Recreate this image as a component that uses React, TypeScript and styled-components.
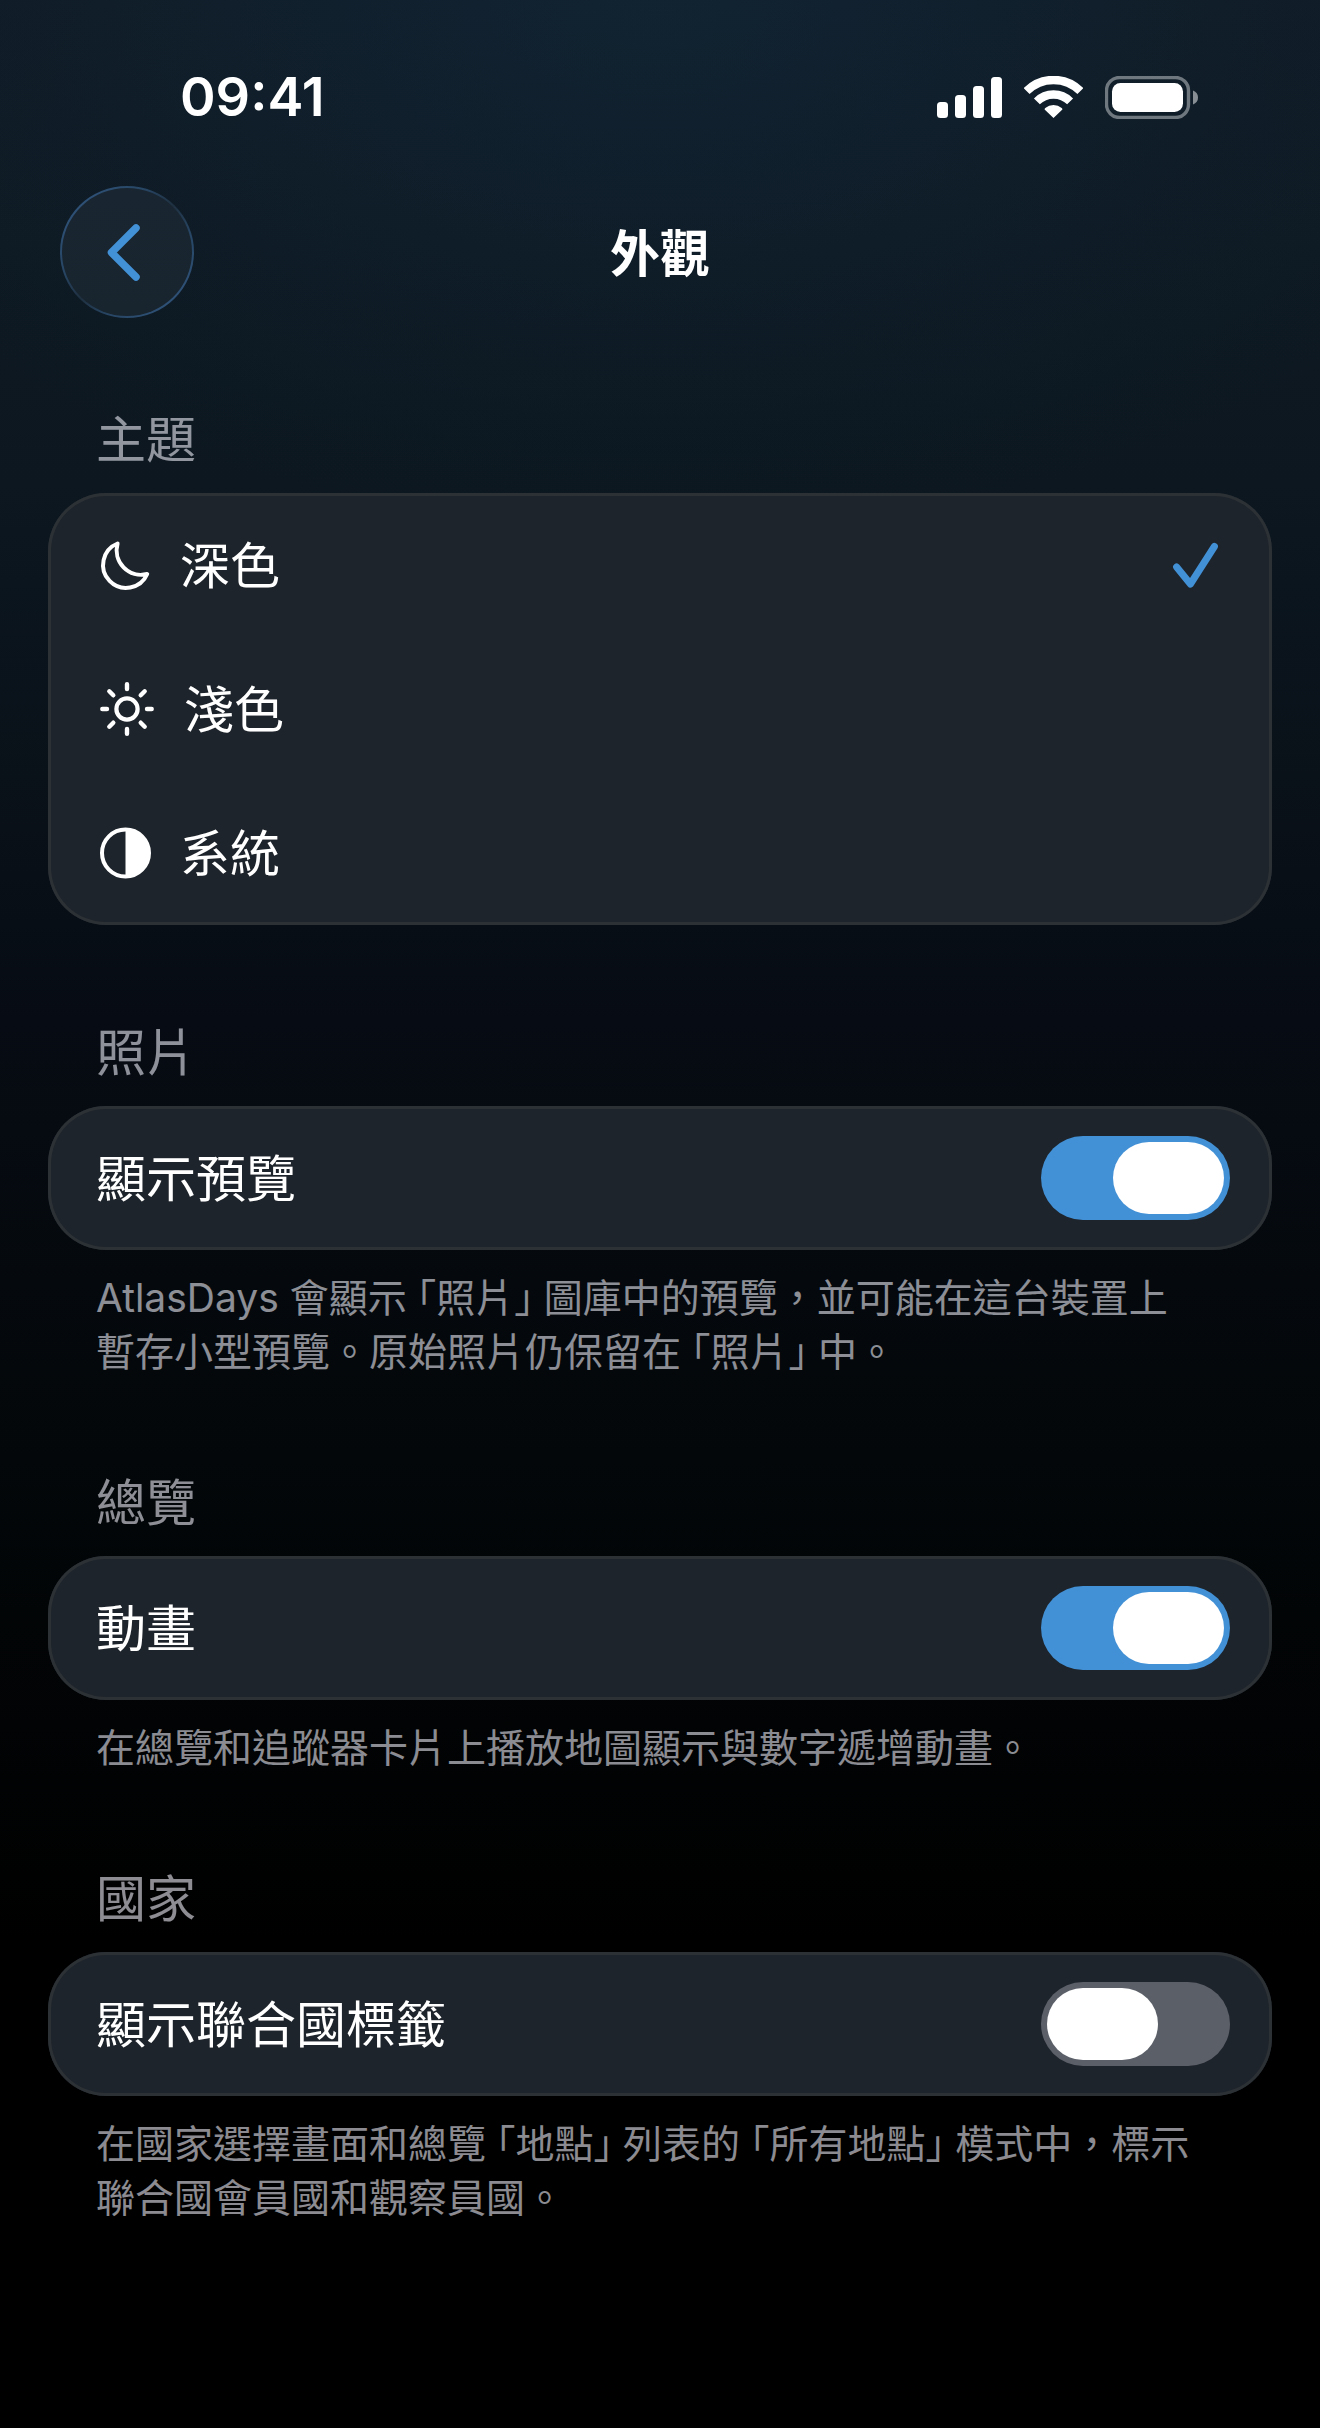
import React, { useState } from "react";
import styled, { createGlobalStyle } from "styled-components";

const accent = "#4290d5";
const secondary = "rgba(235, 235, 245, 0.6)";

const GlobalStyle = createGlobalStyle`
  *, *::before, *::after { box-sizing: border-box; }
  html { background: #000; }
  body {
    margin: 0;
    font-family: Inter, "Noto Sans CJK TC", sans-serif;
    color: #fff;
  }
`;

const Screen = styled.div`
  min-height: 100vh;
  padding-bottom: 96px;
  background:
    radial-gradient(ellipse 70% 22% at 50% 0, rgba(20, 52, 78, 0.3), transparent),
    linear-gradient(#101b25 0%, #0c171f 20%, #070c14 42%, #030709 60%, #000 80%);
`;

const StatusBar = styled.div`
  display: flex;
  align-items: center;
  justify-content: space-between;
  padding: 64px 122px 0 180px;
`;

const Clock = styled.time`
  font-size: 54px;
  line-height: 66px;
  font-weight: 600;
`;

const StatusIcons = styled.div`
  display: flex;
  align-items: center;
  gap: 22px;

  svg { display: block; }
`;

const NavBar = styled.header`
  display: grid;
  grid-template-columns: 134px 1fr 134px;
  align-items: center;
  padding: 56px 60px 0;
`;

const BackButton = styled.button`
  width: 134px;
  height: 132px;
  padding: 0;
  border: 2px solid transparent;
  border-radius: 50%;
  background:
    linear-gradient(#192631, #18242e) padding-box,
    linear-gradient(135deg, #2f5278 12%, #274563 34%, #1f3040 50%, #274563 66%, #2f5278 88%) border-box;
  cursor: pointer;

  svg { display: block; margin: auto; }
`;

const Title = styled.h1`
  margin: 0;
  padding-top: 3px;
  font-size: 50px;
  line-height: 66px;
  font-weight: 600;
  text-align: center;
`;

const Content = styled.main`
  display: flex;
  flex-direction: column;
  gap: 95px;
  padding: 89px 48px 0;
`;

const SectionTitle = styled.h2`
  margin: 0 48px 20px;
  font-size: 50px;
  line-height: 66px;
  font-weight: 400;
  color: ${secondary};
`;

const Card = styled.div`
  border-radius: 58px;
  background: #1e242b;
  box-shadow: inset 0 0 0 3px #2c3136;
`;

const Row = styled.label`
  display: flex;
  align-items: center;
  min-height: 144px;
  padding: 0 42px 0 48px;
  font-size: 50px;
  line-height: 66px;
  cursor: pointer;
`;

const RowLabel = styled.span`
  flex: 1;
  padding-top: 2px;
`;

const OptionIcon = styled.span`
  margin: 0 28px 0 2px;

  svg { display: block; }
`;

const HiddenRadio = styled.input`
  position: absolute;
  opacity: 0;
  pointer-events: none;
`;

const Switch = styled.input`
  appearance: none;
  display: flex;
  flex: none;
  width: 189px;
  height: 84px;
  margin: 0;
  padding: 6px;
  border-radius: 42px;
  background: #5b5f68;
  cursor: pointer;

  &::before {
    content: "";
    width: 111px;
    height: 72px;
    border-radius: 36px;
    background: #fff;
  }

  &:checked {
    justify-content: flex-end;
    background: ${accent};
  }
`;

const Note = styled.p`
  margin: 21px 34px -4px 48px;
  padding-right: 48px;
  font-size: 39px;
  line-height: 54px;
  color: ${secondary};
`;

const OpenMark = styled.span`
  margin-left: 10px;
  font-feature-settings: "halt";
`;

const CloseMark = styled.span`
  margin-right: 10px;
  font-feature-settings: "halt";
`;

function Quoted({ children }: { children: React.ReactNode }) {
  return (
    <>
      <OpenMark>「</OpenMark>
      {children}
      <CloseMark>」</CloseMark>
    </>
  );
}

function SignalIcon() {
  return (
    <svg width="65" height="42" viewBox="0 0 65 42" fill="#fff" aria-hidden="true">
      <rect x="0" y="26" width="11" height="16" rx="3.5" />
      <rect x="18" y="19" width="11" height="23" rx="3.5" />
      <rect x="36" y="10" width="11" height="32" rx="3.5" />
      <rect x="54" y="1" width="11" height="41" rx="3.5" />
    </svg>
  );
}

function WifiIcon() {
  return (
    <svg width="59" height="42" viewBox="0 0 59 42" fill="none" aria-hidden="true">
      <path d="M2.6 15.1 A38 38 0 0 1 56.4 15.1" stroke="#fff" strokeWidth="8.4" />
      <path d="M12.9 25.4 A23.5 23.5 0 0 1 46.1 25.4" stroke="#fff" strokeWidth="8.4" />
      <path d="M29.5 42 L20.6 33.4 Q20.4 32.4 21.3 31.9 A13 13 0 0 1 37.7 31.9 Q38.6 32.4 38.4 33.4 Z" fill="#fff" />
    </svg>
  );
}

function BatteryIcon() {
  return (
    <svg width="93" height="43" viewBox="0 0 93 43" aria-hidden="true">
      <rect x="1.5" y="1.5" width="82" height="40" rx="13" fill="none" stroke="#fff" strokeOpacity="0.4" strokeWidth="3.4" />
      <rect x="7" y="7" width="71" height="29" rx="8.5" fill="#fff" />
      <path d="M88 14.5 Q93 16.5 93 21.5 Q93 26.5 88 28.5 Z" fill="#fff" fillOpacity="0.5" />
    </svg>
  );
}

function ChevronIcon() {
  return (
    <svg width="130" height="128" viewBox="2 2 130 128" fill="none" aria-hidden="true">
      <path d="M76 42 L51.5 66.5 L76 91" stroke={accent} strokeWidth="7.5" strokeLinecap="round" strokeLinejoin="round" />
    </svg>
  );
}

function MoonIcon() {
  return (
    <svg width="54" height="58" viewBox="0 0 54 58" fill="none" aria-hidden="true">
      <path
        d="M19.6 7.5 A23 23 0 1 0 49.2 38 A24.5 24.5 0 0 1 19.6 7.5 Z"
        stroke="#fff"
        strokeWidth="4"
        strokeLinejoin="round"
      />
    </svg>
  );
}

function SunIcon() {
  return (
    <svg width="58" height="58" viewBox="-29 -29 58 58" fill="none" stroke="#fff" strokeWidth="4.4" strokeLinecap="round" aria-hidden="true">
      <circle r="10.6" strokeWidth="4.2" />
      <path d="M0 -20 V-24.7 M0 20 V24.7 M-20 0 H-24.7 M20 0 H24.7 M13.7 -13.7 L17.7 -17.7 M13.7 13.7 L17.7 17.7 M-13.7 13.7 L-17.7 17.7 M-13.7 -13.7 L-17.7 -17.7" />
    </svg>
  );
}

function ContrastIcon() {
  return (
    <svg width="54" height="58" viewBox="0 0 54 58" fill="none" aria-hidden="true">
      <circle cx="27.5" cy="29" r="23.5" stroke="#fff" strokeWidth="4" />
      <path d="M27.5 5.5 A23.5 23.5 0 0 1 27.5 52.5 Z" fill="#fff" />
    </svg>
  );
}

function CheckIcon() {
  return (
    <svg width="60" height="58" viewBox="0 0 60 58" fill="none" aria-hidden="true">
      <path d="M6.6 31 L20.4 48 L44.4 10.5" stroke={accent} strokeWidth="7" strokeLinecap="round" strokeLinejoin="round" />
    </svg>
  );
}

const themes = [
  { id: "dark", label: "深色", icon: <MoonIcon /> },
  { id: "light", label: "淺色", icon: <SunIcon /> },
  { id: "system", label: "系統", icon: <ContrastIcon /> },
];

interface ToggleSectionProps {
  title: string;
  label: string;
  initial: boolean;
  children: React.ReactNode;
}

function ToggleSection({ title, label, initial, children }: ToggleSectionProps) {
  const [on, setOn] = useState(initial);
  return (
    <section>
      <SectionTitle>{title}</SectionTitle>
      <Card>
        <Row>
          <RowLabel>{label}</RowLabel>
          <Switch type="checkbox" role="switch" checked={on} onChange={(e) => setOn(e.target.checked)} />
        </Row>
      </Card>
      <Note>{children}</Note>
    </section>
  );
}

export default function App() {
  const [theme, setTheme] = useState("dark");
  return (
    <Screen lang="zh-Hant">
      <GlobalStyle />
      <StatusBar>
        <Clock>09:41</Clock>
        <StatusIcons>
          <SignalIcon />
          <WifiIcon />
          <BatteryIcon />
        </StatusIcons>
      </StatusBar>
      <NavBar>
        <BackButton type="button" aria-label="返回">
          <ChevronIcon />
        </BackButton>
        <Title>外觀</Title>
      </NavBar>
      <Content>
        <section>
          <SectionTitle>主題</SectionTitle>
          <Card role="radiogroup" aria-label="主題">
            {themes.map((t) => (
              <Row key={t.id}>
                <HiddenRadio type="radio" name="theme" checked={theme === t.id} onChange={() => setTheme(t.id)} />
                <OptionIcon>{t.icon}</OptionIcon>
                <RowLabel>{t.label}</RowLabel>
                {theme === t.id && <CheckIcon />}
              </Row>
            ))}
          </Card>
        </section>
        <ToggleSection title="照片" label="顯示預覽" initial={true}>
          AtlasDays 會顯示<Quoted>照片</Quoted>圖庫中的預覽，並可能在這台裝置上暫存小型預覽。原始照片仍保留在<Quoted>照片</Quoted>中。
        </ToggleSection>
        <ToggleSection title="總覽" label="動畫" initial={true}>
          在總覽和追蹤器卡片上播放地圖顯示與數字遞增動畫。
        </ToggleSection>
        <ToggleSection title="國家" label="顯示聯合國標籤" initial={false}>
          在國家選擇畫面和總覽<Quoted>地點</Quoted>列表的<Quoted>所有地點</Quoted>模式中，標示聯合國會員國和觀察員國。
        </ToggleSection>
      </Content>
    </Screen>
  );
}
